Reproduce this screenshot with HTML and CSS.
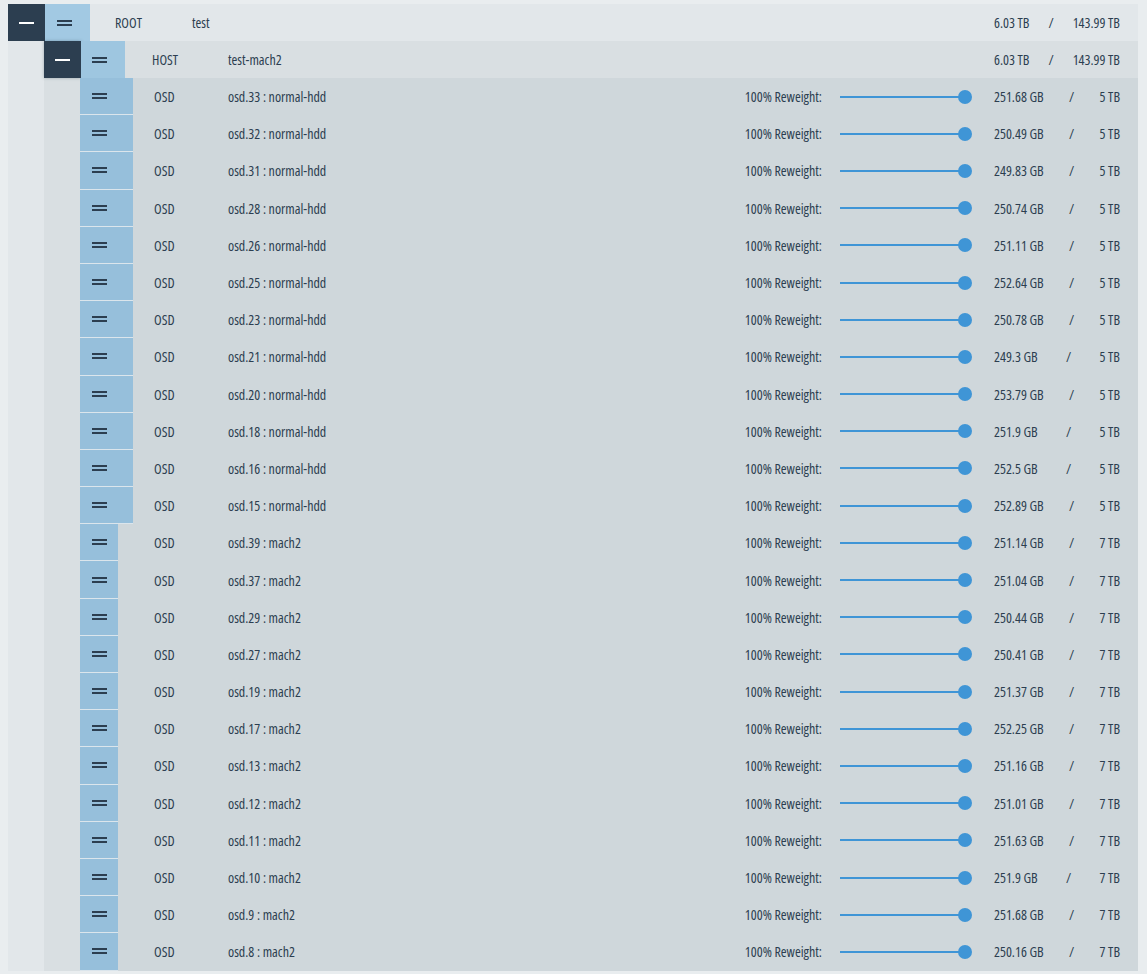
FILE: index.html
```html
<!DOCTYPE html>
<html>
<head>
<meta charset="utf-8">
<link rel="stylesheet" href="styles.css">
</head>
<body>
<div class="tree root">
  <div class="node-row root-row">
    <div class="toggle"><span class="minus"></span></div>
    <div class="handle root-handle"><span class="grip"></span></div>
    <div class="type root-type">ROOT</div>
    <div class="name">test</div>
    <div class="usage"><span>6.03 TB</span><span>/</span><span>143.99 TB</span></div>
  </div>
  <div class="children">
    <div class="tree host">
      <div class="node-row host-row">
        <div class="toggle raised"><span class="minus"></span></div>
        <div class="handle host-handle"><span class="grip"></span></div>
        <div class="type host-type">HOST</div>
        <div class="name">test-mach2</div>
        <div class="usage"><span>6.03 TB</span><span>/</span><span>143.99 TB</span></div>
      </div>
      <div class="children osd-list">
        <div class="osd-row"><div class="osd-handle-cell"><div class="handle osd-handle wide"><span class="grip"></span></div></div><div class="type">OSD</div><div class="name">osd.33 : normal-hdd</div><div class="reweight">100% Reweight:</div><div class="slider"><span class="track"></span><span class="thumb"></span></div><div class="usage"><span>251.68 GB</span><span>/</span><span>5 TB</span></div></div>
        <div class="osd-row"><div class="osd-handle-cell"><div class="handle osd-handle wide"><span class="grip"></span></div></div><div class="type">OSD</div><div class="name">osd.32 : normal-hdd</div><div class="reweight">100% Reweight:</div><div class="slider"><span class="track"></span><span class="thumb"></span></div><div class="usage"><span>250.49 GB</span><span>/</span><span>5 TB</span></div></div>
        <div class="osd-row"><div class="osd-handle-cell"><div class="handle osd-handle wide"><span class="grip"></span></div></div><div class="type">OSD</div><div class="name">osd.31 : normal-hdd</div><div class="reweight">100% Reweight:</div><div class="slider"><span class="track"></span><span class="thumb"></span></div><div class="usage"><span>249.83 GB</span><span>/</span><span>5 TB</span></div></div>
        <div class="osd-row"><div class="osd-handle-cell"><div class="handle osd-handle wide"><span class="grip"></span></div></div><div class="type">OSD</div><div class="name">osd.28 : normal-hdd</div><div class="reweight">100% Reweight:</div><div class="slider"><span class="track"></span><span class="thumb"></span></div><div class="usage"><span>250.74 GB</span><span>/</span><span>5 TB</span></div></div>
        <div class="osd-row"><div class="osd-handle-cell"><div class="handle osd-handle wide"><span class="grip"></span></div></div><div class="type">OSD</div><div class="name">osd.26 : normal-hdd</div><div class="reweight">100% Reweight:</div><div class="slider"><span class="track"></span><span class="thumb"></span></div><div class="usage"><span>251.11 GB</span><span>/</span><span>5 TB</span></div></div>
        <div class="osd-row"><div class="osd-handle-cell"><div class="handle osd-handle wide"><span class="grip"></span></div></div><div class="type">OSD</div><div class="name">osd.25 : normal-hdd</div><div class="reweight">100% Reweight:</div><div class="slider"><span class="track"></span><span class="thumb"></span></div><div class="usage"><span>252.64 GB</span><span>/</span><span>5 TB</span></div></div>
        <div class="osd-row"><div class="osd-handle-cell"><div class="handle osd-handle wide"><span class="grip"></span></div></div><div class="type">OSD</div><div class="name">osd.23 : normal-hdd</div><div class="reweight">100% Reweight:</div><div class="slider"><span class="track"></span><span class="thumb"></span></div><div class="usage"><span>250.78 GB</span><span>/</span><span>5 TB</span></div></div>
        <div class="osd-row"><div class="osd-handle-cell"><div class="handle osd-handle wide"><span class="grip"></span></div></div><div class="type">OSD</div><div class="name">osd.21 : normal-hdd</div><div class="reweight">100% Reweight:</div><div class="slider"><span class="track"></span><span class="thumb"></span></div><div class="usage"><span>249.3 GB</span><span>/</span><span>5 TB</span></div></div>
        <div class="osd-row"><div class="osd-handle-cell"><div class="handle osd-handle wide"><span class="grip"></span></div></div><div class="type">OSD</div><div class="name">osd.20 : normal-hdd</div><div class="reweight">100% Reweight:</div><div class="slider"><span class="track"></span><span class="thumb"></span></div><div class="usage"><span>253.79 GB</span><span>/</span><span>5 TB</span></div></div>
        <div class="osd-row"><div class="osd-handle-cell"><div class="handle osd-handle wide"><span class="grip"></span></div></div><div class="type">OSD</div><div class="name">osd.18 : normal-hdd</div><div class="reweight">100% Reweight:</div><div class="slider"><span class="track"></span><span class="thumb"></span></div><div class="usage"><span>251.9 GB</span><span>/</span><span>5 TB</span></div></div>
        <div class="osd-row"><div class="osd-handle-cell"><div class="handle osd-handle wide"><span class="grip"></span></div></div><div class="type">OSD</div><div class="name">osd.16 : normal-hdd</div><div class="reweight">100% Reweight:</div><div class="slider"><span class="track"></span><span class="thumb"></span></div><div class="usage"><span>252.5 GB</span><span>/</span><span>5 TB</span></div></div>
        <div class="osd-row"><div class="osd-handle-cell"><div class="handle osd-handle wide"><span class="grip"></span></div></div><div class="type">OSD</div><div class="name">osd.15 : normal-hdd</div><div class="reweight">100% Reweight:</div><div class="slider"><span class="track"></span><span class="thumb"></span></div><div class="usage"><span>252.89 GB</span><span>/</span><span>5 TB</span></div></div>
        <div class="osd-row"><div class="osd-handle-cell"><div class="handle osd-handle"><span class="grip"></span></div></div><div class="type">OSD</div><div class="name">osd.39 : mach2</div><div class="reweight">100% Reweight:</div><div class="slider"><span class="track"></span><span class="thumb"></span></div><div class="usage"><span>251.14 GB</span><span>/</span><span>7 TB</span></div></div>
        <div class="osd-row"><div class="osd-handle-cell"><div class="handle osd-handle"><span class="grip"></span></div></div><div class="type">OSD</div><div class="name">osd.37 : mach2</div><div class="reweight">100% Reweight:</div><div class="slider"><span class="track"></span><span class="thumb"></span></div><div class="usage"><span>251.04 GB</span><span>/</span><span>7 TB</span></div></div>
        <div class="osd-row"><div class="osd-handle-cell"><div class="handle osd-handle"><span class="grip"></span></div></div><div class="type">OSD</div><div class="name">osd.29 : mach2</div><div class="reweight">100% Reweight:</div><div class="slider"><span class="track"></span><span class="thumb"></span></div><div class="usage"><span>250.44 GB</span><span>/</span><span>7 TB</span></div></div>
        <div class="osd-row"><div class="osd-handle-cell"><div class="handle osd-handle"><span class="grip"></span></div></div><div class="type">OSD</div><div class="name">osd.27 : mach2</div><div class="reweight">100% Reweight:</div><div class="slider"><span class="track"></span><span class="thumb"></span></div><div class="usage"><span>250.41 GB</span><span>/</span><span>7 TB</span></div></div>
        <div class="osd-row"><div class="osd-handle-cell"><div class="handle osd-handle"><span class="grip"></span></div></div><div class="type">OSD</div><div class="name">osd.19 : mach2</div><div class="reweight">100% Reweight:</div><div class="slider"><span class="track"></span><span class="thumb"></span></div><div class="usage"><span>251.37 GB</span><span>/</span><span>7 TB</span></div></div>
        <div class="osd-row"><div class="osd-handle-cell"><div class="handle osd-handle"><span class="grip"></span></div></div><div class="type">OSD</div><div class="name">osd.17 : mach2</div><div class="reweight">100% Reweight:</div><div class="slider"><span class="track"></span><span class="thumb"></span></div><div class="usage"><span>252.25 GB</span><span>/</span><span>7 TB</span></div></div>
        <div class="osd-row"><div class="osd-handle-cell"><div class="handle osd-handle"><span class="grip"></span></div></div><div class="type">OSD</div><div class="name">osd.13 : mach2</div><div class="reweight">100% Reweight:</div><div class="slider"><span class="track"></span><span class="thumb"></span></div><div class="usage"><span>251.16 GB</span><span>/</span><span>7 TB</span></div></div>
        <div class="osd-row"><div class="osd-handle-cell"><div class="handle osd-handle"><span class="grip"></span></div></div><div class="type">OSD</div><div class="name">osd.12 : mach2</div><div class="reweight">100% Reweight:</div><div class="slider"><span class="track"></span><span class="thumb"></span></div><div class="usage"><span>251.01 GB</span><span>/</span><span>7 TB</span></div></div>
        <div class="osd-row"><div class="osd-handle-cell"><div class="handle osd-handle"><span class="grip"></span></div></div><div class="type">OSD</div><div class="name">osd.11 : mach2</div><div class="reweight">100% Reweight:</div><div class="slider"><span class="track"></span><span class="thumb"></span></div><div class="usage"><span>251.63 GB</span><span>/</span><span>7 TB</span></div></div>
        <div class="osd-row"><div class="osd-handle-cell"><div class="handle osd-handle"><span class="grip"></span></div></div><div class="type">OSD</div><div class="name">osd.10 : mach2</div><div class="reweight">100% Reweight:</div><div class="slider"><span class="track"></span><span class="thumb"></span></div><div class="usage"><span>251.9 GB</span><span>/</span><span>7 TB</span></div></div>
        <div class="osd-row"><div class="osd-handle-cell"><div class="handle osd-handle"><span class="grip"></span></div></div><div class="type">OSD</div><div class="name">osd.9 : mach2</div><div class="reweight">100% Reweight:</div><div class="slider"><span class="track"></span><span class="thumb"></span></div><div class="usage"><span>251.68 GB</span><span>/</span><span>7 TB</span></div></div>
        <div class="osd-row"><div class="osd-handle-cell"><div class="handle osd-handle"><span class="grip"></span></div></div><div class="type">OSD</div><div class="name">osd.8 : mach2</div><div class="reweight">100% Reweight:</div><div class="slider"><span class="track"></span><span class="thumb"></span></div><div class="usage"><span>250.16 GB</span><span>/</span><span>7 TB</span></div></div>
      </div>
    </div>
  </div>
</div>
</body>
</html>
```
FILE: styles.css
```css
* { box-sizing: border-box; }
html, body { background: #e9edef; }
body {
  margin: 4px 9px 0 8px;
  font-family: "Open Sans", "Roboto Condensed", sans-serif;
  font-stretch: 78%;
  font-weight: 500;
  font-size: 14px;
  color: #2c3e50;
}
.tree.root { background: #e2e7ea; }
.tree.host { background: #d9dfe2; }
.children { padding-left: 36px; }
.osd-list { display: flex; flex-direction: column; }

.node-row {
  display: flex;
  align-items: center;
  height: 37px;
}
.toggle {
  width: 37px;
  height: 37px;
  background: #2c3e50;
  display: flex;
  align-items: center;
  justify-content: center;
  flex: none;
}
.toggle.raised { box-shadow: 0 0 3px rgba(44, 62, 80, 0.35); }
.minus {
  display: block;
  width: 15px;
  height: 2px;
  background: #ffffff;
}
.handle {
  height: 100%;
  display: flex;
  align-items: center;
  padding-left: 12px;
  flex: none;
}
.grip {
  display: block;
  width: 15px;
  height: 6px;
  border-top: 2px solid #2c3e50;
  border-bottom: 2px solid #2c3e50;
}
.root-handle { width: 45px; background: #a2c9e3; }
.host-handle { width: 44px; background: #9ec6e0; padding-left: 11px; }
.type { flex: none; }
.root-type { margin-left: 25px; width: 77px; }
.host-type { margin-left: 27px; width: 76px; }
.name { flex: 1; }
.usage {
  width: 126px;
  margin-right: 18px;
  display: flex;
  justify-content: space-between;
  flex: none;
}

.osd-row {
  display: flex;
  align-items: center;
  height: 37.2px;
  background: #cfd7db;
}
.osd-handle-cell {
  width: 74px;
  height: 100%;
  flex: none;
}
.osd-handle {
  width: 38px;
  background: #96bfdb;
  border-bottom: 1px solid #dbe5ec;
}
.osd-handle.wide { width: 53px; }
.osd-row .type { width: 74px; }
.reweight { flex: none; margin-right: 18px; }
.slider {
  position: relative;
  width: 132px;
  height: 14px;
  margin-right: 22px;
  flex: none;
}
.track {
  position: absolute;
  left: 0;
  right: 7px;
  top: 6px;
  height: 2px;
  background: #3f95d6;
}
.thumb {
  position: absolute;
  right: 0;
  top: 0;
  width: 14px;
  height: 14px;
  border-radius: 50%;
  background: #3f95d6;
}
```
